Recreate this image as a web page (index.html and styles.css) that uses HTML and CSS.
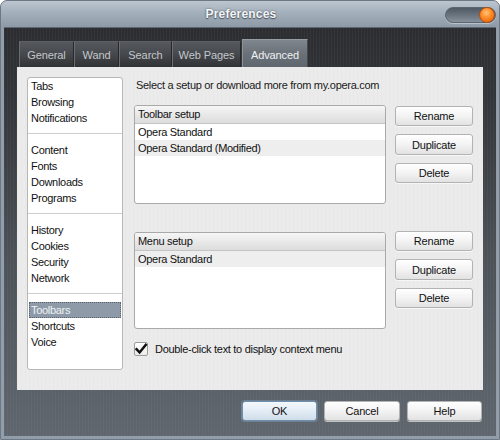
FILE: index.html
```html
<!DOCTYPE html>
<html>
<head>
<meta charset="utf-8">
<title>Preferences</title>
<link rel="stylesheet" href="styles.css">
</head>
<body>
<div class="window">
  <div class="titlebar">
    <div class="title">Preferences</div>
    <div class="closebtn"><span class="orb"></span></div>
  </div>
  <div class="body">
    <div class="tabs">
      <div class="tab w-general">General</div>
      <div class="tab w-wand">Wand</div>
      <div class="tab w-search">Search</div>
      <div class="tab w-web">Web Pages</div>
      <div class="tab active w-adv">Advanced</div>
    </div>
    <div class="panel">
      <div class="nav">
        <div class="item">Tabs</div>
        <div class="item">Browsing</div>
        <div class="item">Notifications</div>
        <div class="sep"></div>
        <div class="item">Content</div>
        <div class="item">Fonts</div>
        <div class="item">Downloads</div>
        <div class="item">Programs</div>
        <div class="sep"></div>
        <div class="item">History</div>
        <div class="item">Cookies</div>
        <div class="item">Security</div>
        <div class="item">Network</div>
        <div class="sep"></div>
        <div class="item selected">Toolbars</div>
        <div class="item">Shortcuts</div>
        <div class="item">Voice</div>
      </div>
      <div class="main">
        <div class="desc">Select a setup or download more from my.opera.com</div>
        <div class="setup">
          <div class="listbox lb-toolbar">
            <div class="lhead">Toolbar setup</div>
            <div class="row">Opera Standard</div>
            <div class="row alt">Opera Standard (Modified)</div>
          </div>
          <div class="btns btns-top">
            <button class="btn">Rename</button>
            <button class="btn">Duplicate</button>
            <button class="btn">Delete</button>
          </div>
        </div>
        <div class="setup setup-menu">
          <div class="listbox lb-menu">
            <div class="lhead">Menu setup</div>
            <div class="row alt">Opera Standard</div>
          </div>
          <div class="btns btns-menu">
            <button class="btn">Rename</button>
            <button class="btn">Duplicate</button>
            <button class="btn">Delete</button>
          </div>
        </div>
        <div class="check">
          <span class="cbox"><svg width="14" height="14" viewBox="0 0 14 14"><path d="M2.5 7.2 L5.6 10.4 L11.8 2.8" fill="none" stroke="#111" stroke-width="2.4" stroke-linecap="square"/></svg></span>
          <span>Double-click text to display context menu</span>
        </div>
      </div>
    </div>
    <div class="footer">
      <button class="btn fbtn ok">OK</button>
      <button class="btn fbtn wide">Cancel</button>
      <button class="btn fbtn">Help</button>
    </div>
  </div>
</div>
</body>
</html>
```

FILE: styles.css
```css
* { box-sizing: border-box; }
html, body { margin: 0; padding: 0; background: #ffffff; }
body { font-family: "Liberation Sans", Arial, sans-serif; font-size: 11px; color: #111; letter-spacing: -0.3px; }

.window {
  width: 500px;
  height: 440px;
  display: flex;
  flex-direction: column;
  border: 1px solid #6d7883;
  border-radius: 7px 7px 0 0;
  background: #919daa;
  overflow: hidden;
}

.titlebar {
  height: 26px;
  flex: none;
  position: relative;
  display: flex;
  align-items: center;
  justify-content: center;
  background: linear-gradient(#bcc6d0, #a3afbb 45%, #8e9aa6);
}
.title {
  font-size: 12px;
  font-weight: bold;
  color: #f4f6f8;
  text-shadow: 0 0 2px #4d5660, 0 1px 1px #4d5660;
  padding-right: 18px;
  letter-spacing: 0.2px;
}
.closebtn {
  position: absolute;
  right: 3px;
  top: 6px;
  width: 51px;
  height: 16px;
  border-radius: 8px;
  background: linear-gradient(#4f5963, #6e7984 60%, #86919c);
  border: 1px solid #5b6670;
  box-shadow: 0 1px 0 #b8c2cc;
}
.orb {
  position: absolute;
  right: 0px;
  top: -1px;
  width: 16px;
  height: 16px;
  border-radius: 50%;
  background: radial-gradient(circle at 45% 35%, #ffc27a 0, #ff8a25 45%, #d9560a 100%);
  border: 1px solid #b2500f;
}

.body {
  flex: 1;
  margin: 0 3px 3px;
  display: flex;
  flex-direction: column;
  background:
    repeating-linear-gradient(90deg, rgba(255,255,255,0.035) 0 1px, rgba(0,0,0,0) 1px 3px),
    linear-gradient(#2b2d30 0%, #34373b 20%, #4b5157 55%, #5f666e 100%);
  box-shadow: inset 0 1px 0 #5d6670;
}

.tabs {
  display: flex;
  align-items: flex-end;
  height: 40px;
  padding: 12px 0 0 15px;
}
.tab {
  height: 26px;
  display: flex;
  align-items: center;
  justify-content: center;
  color: #c3c7cb;
  font-size: 11px;
  letter-spacing: -0.1px;
  background: linear-gradient(#55595e, #45484c 50%, #303235);
  border-left: 1px solid #6a6e73;
  border-right: 1px solid #26282a;
  border-top: 1px solid #5c6065;
}
.w-general { width: 55px; }
.w-wand { width: 45px; }
.w-search { width: 53px; }
.w-web { width: 69px; }
.w-adv { width: 66px; margin-left: 1px; }
.tab.active {
  height: 28px;
  color: #eef1f4;
  background: linear-gradient(#80868d, #6b7178 50%, #60666d);
  border-left: 1px solid #8b9299;
  border-right: 1px solid #444a50;
  border-top: 1px solid #959ca3;
  padding-top: 2px;
}

.panel {
  margin-left: 13px;
  width: 466px;
  height: 323px;
  display: flex;
  gap: 11px;
  padding: 10px 10px 20px 10px;
  background:
    repeating-linear-gradient(90deg, rgba(0,0,0,0.012) 0 1px, rgba(255,255,255,0) 1px 4px),
    #ebebeb;
}

.nav {
  width: 96px;
  height: 293px;
  background: #fff;
  border: 1px solid #b7b7b7;
  border-radius: 3px;
}
.item {
  height: 16px;
  line-height: 16px;
  padding-left: 3px;
  white-space: nowrap;
}
.sep {
  height: 16px;
  position: relative;
}
.sep::after {
  content: "";
  position: absolute;
  left: 0;
  right: 0;
  top: 7px;
  height: 1px;
  background: #cdcdcd;
}
.item.selected {
  background: #8f9aa8;
  color: #eef2f6;
  outline: 1px dotted #59636e;
  outline-offset: -1px;
  margin: 0 1px;
  padding-left: 2px;
}

.main {
  flex: 1;
  display: flex;
  flex-direction: column;
}
.desc {
  height: 14px;
  line-height: 14px;
  margin-top: 1px;
  padding-left: 2px;
  color: #1a1a1a;
}
.setup {
  display: flex;
  gap: 9px;
  margin-top: 13px;
}
.setup-menu { margin-top: 28px; }
.listbox {
  width: 252px;
  background: #fff;
  border: 1px solid #a9a9a9;
  border-radius: 3px;
  overflow: hidden;
}
.lb-toolbar { height: 99px; }
.lb-menu { height: 97px; }
.lhead {
  height: 18px;
  line-height: 17px;
  padding-left: 3px;
  background: linear-gradient(#f6f6f6, #e6e6e6 60%, #dcdcdc);
  border-bottom: 1px solid #c4c4c4;
}
.row {
  height: 16px;
  line-height: 16px;
  padding-left: 3px;
}
.row.alt { background: #eeeeee; }

.btns {
  display: flex;
  flex-direction: column;
  gap: 8px;
  width: 78px;
}
.btns-top { padding-top: 1px; }
.btns-menu { margin-top: -1px; }
.btn {
  height: 20px;
  width: 78px;
  padding: 0;
  font-family: "Liberation Sans", Arial, sans-serif;
  font-size: 11px;
  letter-spacing: -0.2px;
  color: #111;
  border: 1px solid #b3b3b3;
  border-radius: 3px;
  background: linear-gradient(#ffffff, #f3f3f3 50%, #e2e2e2);
  box-shadow: 0 1px 0 rgba(255,255,255,0.6);
}
.btns .btn:nth-child(2) { height: 21px; }

.check {
  display: flex;
  align-items: center;
  gap: 7px;
  margin-top: 13px;
  height: 14px;
}
.cbox {
  width: 14px;
  height: 14px;
  display: block;
  background: linear-gradient(#ffffff, #ececec);
  border: 1px solid #9c9c9c;
  border-radius: 2px;
  position: relative;
}
.cbox svg { position: absolute; left: -1px; top: -1px; }

.footer {
  display: flex;
  justify-content: flex-end;
  gap: 7px;
  margin-top: 11px;
  padding-right: 14px;
}
.fbtn { width: 75px; height: 20px; }
.fbtn.wide { width: 76px; }
.ok {
  border: 1px solid #6f8fb0;
  background: linear-gradient(#f4f8fc, #e3ecf5 50%, #cfdde9);
  box-shadow: 0 0 0 1px rgba(150,180,210,0.35);
}
```
